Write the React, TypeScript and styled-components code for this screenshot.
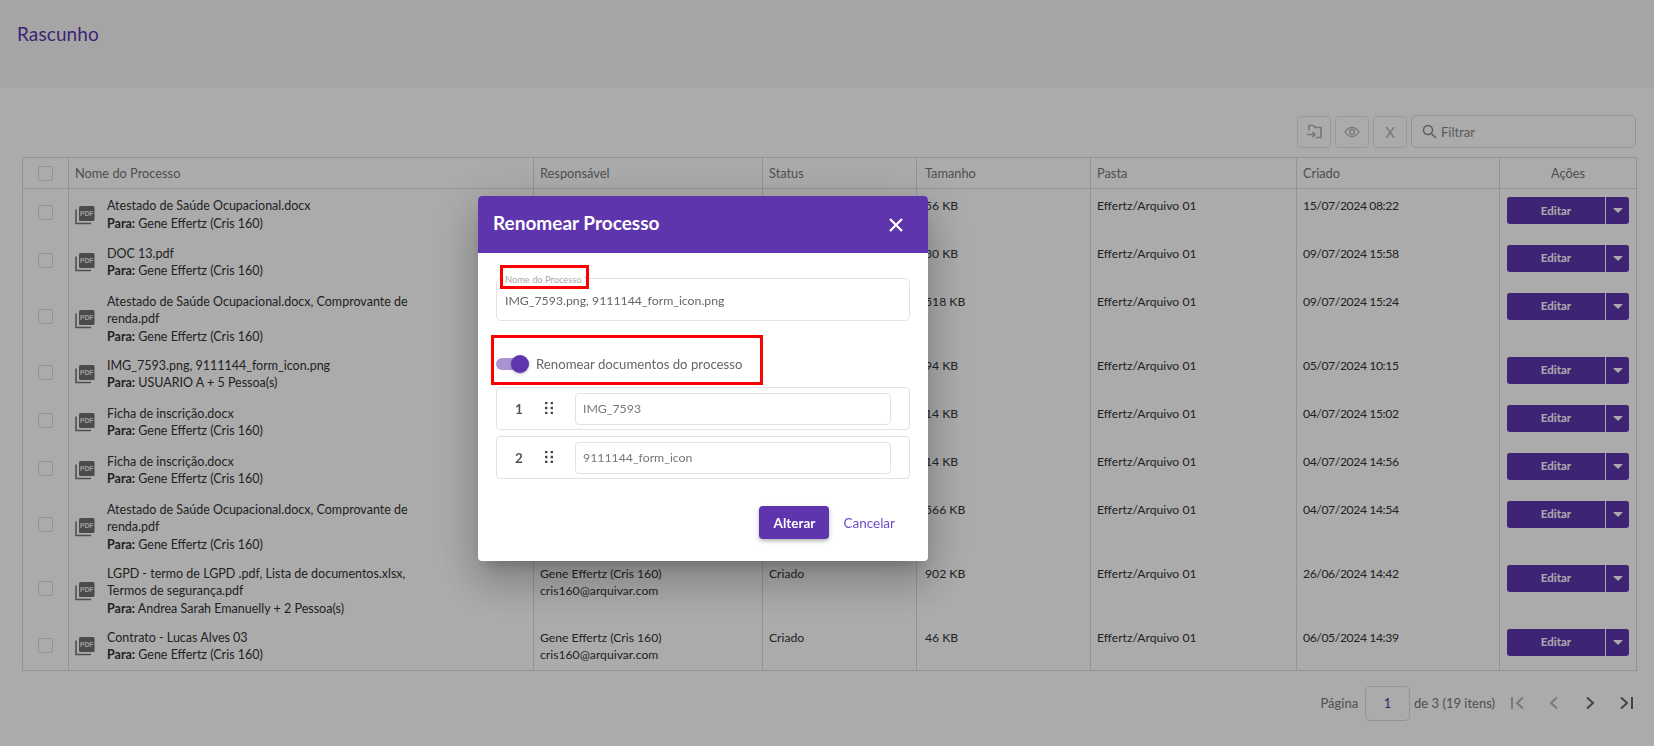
import React from "react";
import styled, { createGlobalStyle } from "styled-components";

const Global = createGlobalStyle`
  * { box-sizing: border-box; }
  html, body { margin: 0; padding: 0; background: #fff; }
  body { font-family: "Lato", "Noto Sans", sans-serif; color: #333; overflow: hidden; height: 746px; }
`;

const Page = styled.div`
  width: 1654px;
  height: 746px;
  display: flex;
  flex-direction: column;
  background: #fff;
`;
const TopBar = styled.header`
  height: 88px;
  flex: none;
  background: #f7f7f7;
  padding: 23px 17px 0;
  font-size: 19px;
  font-weight: 400;
  letter-spacing: 0.1px;
  line-height: 22px;
  color: #5e35ad;
`;
const Main = styled.main`
  flex: 1;
  display: flex;
  flex-direction: column;
  padding: 27px 18px 0 22px;
`;
const Toolbar = styled.div`
  display: flex;
  justify-content: flex-end;
  align-items: center;
  gap: 4px;
  height: 33px;
  margin-bottom: 9px;
`;
const ToolButton = styled.button`
  width: 34px;
  height: 32px;
  padding: 0;
  border: 1px solid #e6e6e6;
  border-radius: 4px;
  background: transparent;
  color: #b4b4b4;
  font: 400 15px "Lato", sans-serif;
  display: flex;
  align-items: center;
  justify-content: center;
`;
const FilterBox = styled.div`
  width: 225px;
  height: 33px;
  border: 1px solid #ddd;
  border-radius: 5px;
  display: flex;
  align-items: center;
  gap: 4px;
  padding: 0 10px;
  font-size: 13px;
  color: #888;
`;
const Table = styled.table`
  width: 1614px;
  table-layout: fixed;
  border-collapse: collapse;
  border: 1px solid #dcdcdc;
  font-size: 12.2px;
`;
const HeadCell = styled.th<{ $center?: boolean; $pad?: number }>`
  height: 31px;
  padding: 0 ${(p) => p.$pad ?? 6}px;
  font-weight: 400;
  font-size: 12.8px;
  color: #777;
  text-align: ${(p) => (p.$center ? "center" : "left")};
  border: 1px solid #dcdcdc;
`;
const Cell = styled.td`
  padding: 8px 6px 0;
  vertical-align: top;
  line-height: 17.5px;
  border-left: 1px solid #dcdcdc;
  border-right: 1px solid #dcdcdc;
`;
const Row = styled.tr<{ $h: number }>`
  height: ${(p) => p.$h}px;
`;
const CheckCell = styled(Cell)`
  vertical-align: middle;
  padding: 0;
`;
const Check = styled.span`
  display: block;
  width: 15px;
  height: 15px;
  margin: 0 auto;
  border: 1px solid #dcdcdc;
  border-radius: 2px;
`;
const NameWrap = styled.div`
  display: flex;
  align-items: center;
  gap: 12px;
  min-height: 35px;
  font-size: 12.5px;
`;
const Names = styled.div`
  width: 320px;
`;
const NameLine = styled.div`
  line-height: 17.5px;
`;
const Para = styled.div`
  line-height: 17px;
  b { font-weight: 700; }
`;
const SizeCell = styled(Cell)`
  padding-left: 8px;
`;
const DateCell = styled(Cell)`
  letter-spacing: -0.4px;
`;
const ActionCell = styled(Cell)`
  padding: 8px 7px 0;
`;
const Split = styled.div`
  display: flex;
  height: 27px;
  width: 122px;
  margin: 0 auto;
  border-radius: 3px;
  overflow: hidden;
  background: #5e35ad;
  color: #fff;
  font-size: 11.5px;
  font-weight: 700;
`;
const SplitMain = styled.div`
  flex: 1;
  display: flex;
  align-items: center;
  justify-content: center;
  border-right: 1px solid #fff;
`;
const SplitCaret = styled.div`
  width: 23px;
  display: flex;
  align-items: center;
  justify-content: center;
  &::after {
    content: "";
    border-left: 5px solid transparent;
    border-right: 5px solid transparent;
    border-top: 5px solid #fff;
  }
`;
const Pager = styled.div`
  display: flex;
  justify-content: flex-end;
  align-items: center;
  height: 36px;
  margin-top: 14px;
  font-size: 13px;
  color: #777;
`;
const PageInput = styled.div`
  width: 45px;
  height: 35px;
  margin: 0 4px 0 7px;
  border: 1px solid #dcdcdc;
  border-radius: 5px;
  display: flex;
  align-items: center;
  justify-content: center;
  color: #5e35ad;
`;
const PagerIcons = styled.div`
  display: flex;
  margin-left: 5px;
  margin-right: -8px;
`;
const PagerIcon = styled.span<{ $off?: boolean }>`
  width: 36px;
  height: 24px;
  display: flex;
  align-items: center;
  justify-content: center;
  color: ${(p) => (p.$off ? "#b5b5b5" : "#666")};
`;

const Overlay = styled.div`
  position: fixed;
  inset: 0;
  background: rgba(0, 0, 0, 0.33);
`;
const Modal = styled.section`
  position: fixed;
  left: 478px;
  top: 196px;
  width: 450px;
  height: 365px;
  background: #fff;
  border-radius: 4px;
  box-shadow: 0 11px 15px -7px rgba(0,0,0,.2), 0 24px 38px 3px rgba(0,0,0,.14), 0 9px 46px 8px rgba(0,0,0,.12);
  display: flex;
  flex-direction: column;
`;
const ModalHead = styled.div`
  height: 57px;
  background: #5e35ad;
  border-radius: 4px 4px 0 0;
  color: #fff;
  display: flex;
  align-items: center;
  justify-content: space-between;
  padding: 0 25px 4px 15px;
  font-size: 19px;
  font-weight: 700;
`;
const CloseIcon = styled.svg`
  width: 14px;
  height: 14px;
  margin-top: 4px;
`;
const ModalBody = styled.div`
  padding: 25px 18px 0;
  display: flex;
  flex-direction: column;
`;
const Field = styled.div`
  position: relative;
  height: 43px;
  border: 1px solid #e2e2e2;
  border-radius: 5px;
  padding: 12px 8px 0;
  font-size: 12.3px;
  line-height: 20px;
  color: #666;
`;
const FloatLabel = styled.span`
  position: absolute;
  left: 7px;
  top: -5px;
  padding: 0 1px;
  background: #fff;
  font-size: 9.3px;
  line-height: 12px;
  color: #aaa;
`;
const ToggleRow = styled.div`
  display: flex;
  align-items: center;
  height: 18px;
  margin-top: 34px;
  gap: 8px;
  font-size: 13.2px;
  color: #666;
`;
const Toggle = styled.span`
  position: relative;
  display: block;
  width: 32px;
  height: 12px;
  border-radius: 6px;
  background: #a993d3;
  &::after {
    content: "";
    position: absolute;
    right: -1px;
    top: -3px;
    width: 18px;
    height: 18px;
    border-radius: 50%;
    background: #5e35ad;
    box-shadow: 0 1px 3px rgba(0,0,0,.3);
  }
`;
const DocList = styled.div`
  margin-top: 14px;
  display: flex;
  flex-direction: column;
  gap: 6px;
`;
const DocRow = styled.div`
  height: 43px;
  border: 1px solid #e2e2e2;
  border-radius: 4px;
  display: flex;
  align-items: center;
`;
const DocNum = styled.span`
  width: 44px;
  text-align: center;
  font-size: 13.5px;
  font-weight: 700;
  color: #555;
`;
const Dots = styled.svg`
  width: 8px;
  height: 12px;
  margin: -2px 0 0 4px;
`;
const DocInput = styled.div`
  width: 316px;
  height: 32px;
  margin-left: 22px;
  border: 1px solid #e2e2e2;
  border-radius: 4px;
  display: flex;
  align-items: center;
  padding: 0 7px;
  font-size: 12.3px;
  color: #777;
`;
const Footer = styled.div`
  display: flex;
  justify-content: flex-end;
  align-items: center;
  margin-top: 27px;
  padding-right: 15px;
  gap: 14px;
`;
const Primary = styled.button`
  width: 70px;
  height: 33px;
  border: 0;
  border-radius: 4px;
  background: #5e35ad;
  color: #fff;
  font: 700 13.5px "Lato", sans-serif;
  box-shadow: 0 2px 4px rgba(0,0,0,.3);
`;
const Ghost = styled.span`
  font-size: 13.5px;
  color: #6f4ac4;
`;
const RedBox = styled.div<{ $l: number; $t: number; $w: number; $h: number }>`
  position: fixed;
  left: ${(p) => p.$l}px;
  top: ${(p) => p.$t}px;
  width: ${(p) => p.$w}px;
  height: ${(p) => p.$h}px;
  border: 3px solid #f00;
`;

const Pdf = () => (
  <svg width="20" height="20" viewBox="0 0 20 20" style={{ flex: "none" }}>
    <path d="M1 4.5v14h15" fill="none" stroke="#777" strokeWidth="1.6" />
    <rect x="4" y="1" width="15.5" height="15" rx="1.5" fill="#707070" />
    <text x="11.7" y="10.8" textAnchor="middle" fontSize="6.8" fontWeight="700" fontFamily="Liberation Sans" fill="#e8e8e8">PDF</text>
  </svg>
);

type R = { names: string[]; para: string; size: string; date: string; h: number };
const rows: R[] = [
  { names: ["Atestado de Saúde Ocupacional.docx"], para: "Gene Effertz (Cris 160)", size: "56 KB", date: "15/07/2024 08:22", h: 48 },
  { names: ["DOC 13.pdf"], para: "Gene Effertz (Cris 160)", size: "30 KB", date: "09/07/2024 15:58", h: 48 },
  { names: ["Atestado de Saúde Ocupacional.docx, Comprovante de renda.pdf"], para: "Gene Effertz (Cris 160)", size: "518 KB", date: "09/07/2024 15:24", h: 64 },
  { names: ["IMG_7593.png, 9111144_form_icon.png"], para: "USUARIO A + 5 Pessoa(s)", size: "94 KB", date: "05/07/2024 10:15", h: 48 },
  { names: ["Ficha de inscrição.docx"], para: "Gene Effertz (Cris 160)", size: "14 KB", date: "04/07/2024 15:02", h: 48 },
  { names: ["Ficha de inscrição.docx"], para: "Gene Effertz (Cris 160)", size: "14 KB", date: "04/07/2024 14:56", h: 48 },
  { names: ["Atestado de Saúde Ocupacional.docx, Comprovante de renda.pdf"], para: "Gene Effertz (Cris 160)", size: "566 KB", date: "04/07/2024 14:54", h: 64 },
  { names: ["LGPD - termo de LGPD .pdf, Lista de documentos.xlsx, Termos de segurança.pdf"], para: "Andrea Sarah Emanuelly + 2 Pessoa(s)", size: "902 KB", date: "26/06/2024 14:42", h: 64 },
  { names: ["Contrato - Lucas Alves 03"], para: "Gene Effertz (Cris 160)", size: "46 KB", date: "06/05/2024 14:39", h: 50 },
];

const widths = [46, 465, 229, 154, 174, 206, 203, 137];

export default function App() {
  return (
    <>
      <Global />
      <Page>
        <TopBar>Rascunho</TopBar>
        <Main>
          <Toolbar>
            <ToolButton aria-label="Mover">
              <svg width="17" height="17" viewBox="0 0 17 17" fill="none" stroke="currentColor" strokeWidth="1.7">
                <path d="M3 7.500V2.500h4.500l1.500 2h6v10H9.500" />
                <path d="M1 11.500h8M6.500 9L9 11.500 6.500 14" />
              </svg>
            </ToolButton>
            <ToolButton aria-label="Ver">
              <svg width="16" height="12" viewBox="0 0 16 12" fill="none" stroke="currentColor" strokeWidth="1.300">
                <path d="M1 6c2-3 4.300-4.500 7-4.500S13 3 15 6c-2 3-4.300 4.500-7 4.500S3 9 1 6z" />
                <circle cx="8" cy="6" r="2.400" />
              </svg>
            </ToolButton>
            <ToolButton>X</ToolButton>
            <FilterBox>
              <svg width="15" height="15" viewBox="0 0 15 15" fill="none" stroke="#8a8a8a" strokeWidth="1.500">
                <circle cx="6" cy="6" r="4.500" />
                <path d="M9.500 9.500L14 14" />
              </svg>
              Filtrar
            </FilterBox>
          </Toolbar>
          <Table>
            <colgroup>
              {widths.map((w, i) => (
                <col key={i} style={{ width: w }} />
              ))}
            </colgroup>
            <thead>
              <tr>
                <HeadCell><Check /></HeadCell>
                <HeadCell>Nome do Processo</HeadCell>
                <HeadCell>Responsável</HeadCell>
                <HeadCell>Status</HeadCell>
                <HeadCell $pad={8}>Tamanho</HeadCell>
                <HeadCell>Pasta</HeadCell>
                <HeadCell>Criado</HeadCell>
                <HeadCell $center>Ações</HeadCell>
              </tr>
            </thead>
            <tbody>
              {rows.map((r, i) => (
                <Row key={i} $h={r.h}>
                  <CheckCell><Check /></CheckCell>
                  <Cell>
                    <NameWrap>
                      <Pdf />
                      <Names>
                        {r.names.map((n) => (
                          <NameLine key={n}>{n}</NameLine>
                        ))}
                        <Para><b>Para:</b> {r.para}</Para>
                      </Names>
                    </NameWrap>
                  </Cell>
                  <Cell>
                    Gene Effertz (Cris 160)
                    <br />
                    cris160@arquivar.com
                  </Cell>
                  <Cell>Criado</Cell>
                  <SizeCell>{r.size}</SizeCell>
                  <Cell>Effertz/Arquivo 01</Cell>
                  <DateCell>{r.date}</DateCell>
                  <ActionCell>
                    <Split>
                      <SplitMain>Editar</SplitMain>
                      <SplitCaret />
                    </Split>
                  </ActionCell>
                </Row>
              ))}
            </tbody>
          </Table>
          <Pager>
            Página
            <PageInput>1</PageInput>
            de 3 (19 itens)
            <PagerIcons>
              <PagerIcon $off>
                <svg width="16" height="14" viewBox="0 0 16 14" fill="none" stroke="currentColor" strokeWidth="2"><path d="M2 1v12M13 1.500L7 7l6 5.500" /></svg>
              </PagerIcon>
              <PagerIcon $off>
                <svg width="10" height="14" viewBox="0 0 10 14" fill="none" stroke="currentColor" strokeWidth="2"><path d="M8 1.500L2 7l6 5.500" /></svg>
              </PagerIcon>
              <PagerIcon>
                <svg width="10" height="14" viewBox="0 0 10 14" fill="none" stroke="currentColor" strokeWidth="2"><path d="M2 1.500L8 7l-6 5.500" /></svg>
              </PagerIcon>
              <PagerIcon>
                <svg width="16" height="14" viewBox="0 0 16 14" fill="none" stroke="currentColor" strokeWidth="2"><path d="M14 1v12M3 1.500L9 7l-6 5.500" /></svg>
              </PagerIcon>
            </PagerIcons>
          </Pager>
        </Main>
      </Page>
      <Overlay />
      <Modal>
        <ModalHead>
          Renomear Processo
          <CloseIcon viewBox="0 0 14 14" fill="none" stroke="#fff" strokeWidth="2.200"><path d="M1 1l12 12M13 1L1 13" /></CloseIcon>
        </ModalHead>
        <ModalBody>
          <Field>
            <FloatLabel>Nome do Processo *</FloatLabel>
            IMG_7593.png, 9111144_form_icon.png
          </Field>
          <ToggleRow>
            <Toggle />
            Renomear documentos do processo
          </ToggleRow>
          <DocList>
            {["IMG_7593", "9111144_form_icon"].map((d, i) => (
              <DocRow key={d}>
                <DocNum>{i + 1}</DocNum>
                <Dots viewBox="0 0 8 12" fill="#444">
                  {[1, 6, 11].flatMap((y) => [1.200, 6.800].map((x) => <rect key={`${x}-${y}`} x={x - 1.2} y={y - 1.2} width="2.400" height="2.400" />))}
                </Dots>
                <DocInput>{d}</DocInput>
              </DocRow>
            ))}
          </DocList>
          <Footer>
            <Primary>Alterar</Primary>
            <Ghost>Cancelar</Ghost>
          </Footer>
        </ModalBody>
      </Modal>
      <RedBox $l={500} $t={265} $w={89} $h={24} />
      <RedBox $l={491} $t={335} $w={272} $h={50} />
    </>
  );
}
